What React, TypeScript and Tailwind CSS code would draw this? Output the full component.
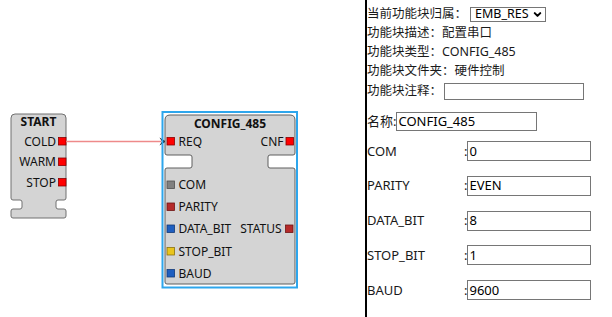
import React from 'react';
import { ChevronDown } from 'lucide-react';

const font = { fontFamily: '"Noto Sans", "Noto Sans CJK SC", sans-serif' };

const params = [
  { name: 'COM', value: '0' },
  { name: 'PARITY', value: 'EVEN' },
  { name: 'DATA_BIT', value: '8' },
  { name: 'STOP_BIT', value: '1' },
  { name: 'BAUD', value: '9600' },
];

const dataPorts = [
  { name: 'COM', fill: '#808080', stroke: '#505050', y: 189 },
  { name: 'PARITY', fill: '#b52a2a', stroke: '#6e1414', y: 211 },
  { name: 'DATA_BIT', fill: '#1f5fc0', stroke: '#123a78', y: 233 },
  { name: 'STOP_BIT', fill: '#e9c41c', stroke: '#8a7210', y: 255.5 },
  { name: 'BAUD', fill: '#1f5fc0', stroke: '#123a78', y: 277.5 },
];

const Diagram = () => (
  <svg width="365" height="317" viewBox="0 0 365 317" style={font}>
    {/* START block */}
    <path
      d="M15,114 H62 Q66,114 66,118 V198 Q66,200 64,200 H58 Q56,200 56,202 V207 Q56,209 58,209 H64 Q66,209 66,211 V216 Q66,218 64,218 H13 Q11,218 11,216 V211 Q11,209 13,209 H20 Q22,209 22,207 V202 Q22,200 20,200 H13 Q11,200 11,198 V118 Q11,114 15,114 Z"
      fill="#d4d4d4"
      stroke="#707070"
      strokeWidth="1"
    />
    <text x="38.5" y="126" textAnchor="middle" fontSize="12" fontWeight="700" fill="#111">START</text>
    {[
      { n: 'COLD', y: 145.5 },
      { n: 'WARM', y: 166 },
      { n: 'STOP', y: 186.5 },
    ].map(p => (
      <g key={p.n}>
        <text x="56" y={p.y} textAnchor="end" fontSize="12" fill="#111">{p.n}</text>
        <rect x="58.5" y={p.y - 8} width="7.5" height="7.5" fill="#ff0000" stroke="#8a0000" strokeWidth="0.8" />
      </g>
    ))}

    {/* connection */}
    <line x1="66" y1="141.5" x2="161" y2="141.5" stroke="#ee8a8a" strokeWidth="1.6" />
    <polygon points="159.5,137.5 166,141.5 159.5,145.5 162,141.5" fill="#111" />

    {/* CONFIG_485 block */}
    <rect x="162.5" y="112" width="134.5" height="175.5" fill="none" stroke="#2ea6ec" strokeWidth="2" />
    <path
      d="M170,115 H290 Q295,115 295,120 V153 Q295,155 293,155 H270 Q268,155 268,157 V166 Q268,168 270,168 H293 Q295,168 295,170 V282 Q295,284 293,284 H167 Q165,284 165,282 V170 Q165,168 167,168 H190 Q192,168 192,166 V157 Q192,155 190,155 H167 Q165,155 165,153 V120 Q165,115 170,115 Z"
      fill="#d4d4d4"
      stroke="#5e5e5e"
      strokeWidth="1"
    />
    <text x="230" y="127.5" textAnchor="middle" fontSize="12" fontWeight="700" fill="#111">CONFIG_485</text>
    <rect x="167" y="137.5" width="7.5" height="7.5" fill="#ff0000" stroke="#8a0000" strokeWidth="0.8" />
    <text x="178.5" y="145.5" fontSize="12" fill="#111">REQ</text>
    <text x="283.5" y="145.5" textAnchor="end" fontSize="12" fill="#111">CNF</text>
    <rect x="286" y="137.5" width="7.5" height="7.5" fill="#ff0000" stroke="#8a0000" strokeWidth="0.8" />

    {dataPorts.map(p => (
      <g key={p.name}>
        <rect x="167" y={p.y - 8} width="7.5" height="7.5" fill={p.fill} stroke={p.stroke} strokeWidth="0.8" />
        <text x="178.5" y={p.y} fontSize="12" fill="#111">{p.name}</text>
      </g>
    ))}
    <text x="281.5" y="233" textAnchor="end" fontSize="12" fill="#111">STATUS</text>
    <rect x="285.5" y="225" width="7.5" height="7.5" fill="#b52a2a" stroke="#6e1414" strokeWidth="0.8" />
  </svg>
);

const Field = ({ value, className }: { value: string; className: string }) => (
  <div className={`border border-[#767676] bg-white pl-[1px] flex items-center text-[13px] text-black leading-none ${className}`}>
    {value}
  </div>
);

const Panel = () => (
  <div className="flex-1 h-full border-l-2 border-black pt-[4px] text-[#1a1a1a]" style={font}>
    <div className="h-[20px] flex items-center text-[12.5px] leading-none">
      <span>当前功能块归属：</span>
      <div className="ml-[3px] h-[15px] w-[76px] border border-[#767676] flex items-center justify-between pl-[4px] pr-[2px] text-[12.5px] text-black">
        <span>EMB_RES</span>
        <ChevronDown size={11} strokeWidth={4.5} />
      </div>
    </div>
    <div className="h-[19px] flex items-center text-[12.5px] leading-none">功能块描述：配置串口</div>
    <div className="h-[19px] flex items-center text-[12.5px] leading-none">功能块类型：CONFIG_485</div>
    <div className="h-[19px] flex items-center text-[12.5px] leading-none">功能块文件夹：硬件控制</div>
    <div className="h-[21px] flex items-center text-[12.5px] leading-none">
      <span>功能块注释：</span>
      <div className="ml-[2px] h-[17px] w-[140px] border border-[#767676] bg-white" />
    </div>

    <div className="mt-[10px] h-[19px] flex items-center text-[13px] leading-none">
      <span>名称:</span>
      <Field value="CONFIG_485" className="h-[19px] w-[141px]" />
    </div>

    <div className="mt-[10px] flex flex-col gap-[14.75px]">
      {params.map(p => (
        <div key={p.name} className="h-[20px] flex items-center text-[13px] leading-none">
          <span className="w-[97px]">{p.name}</span>
          <span>:</span>
          <Field value={p.value} className="h-[20px] w-[124px]" />
        </div>
      ))}
    </div>
  </div>
);

export default function App() {
  return (
    <div className="w-[612px] h-[317px] flex bg-white overflow-hidden">
      <div className="w-[365px] h-full shrink-0">
        <Diagram />
      </div>
      <Panel />
    </div>
  );
}
